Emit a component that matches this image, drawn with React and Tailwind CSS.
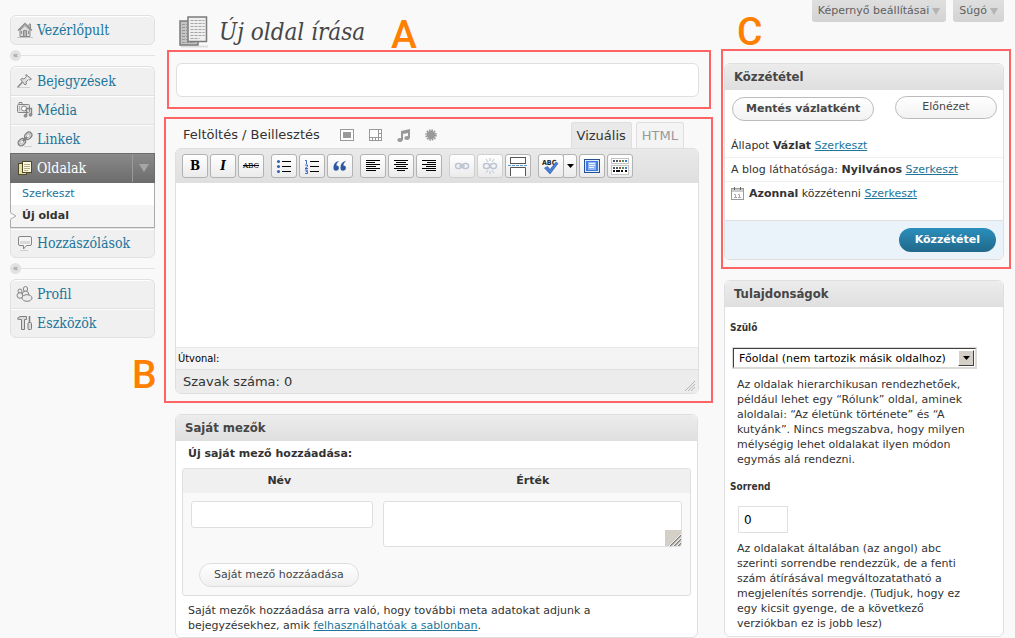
import { useState } from 'react';

const sans = "font-['DejaVu_Sans',Verdana,sans-serif]";
const narrow = "font-['DejaVu_Sans_Condensed','DejaVu_Sans',Tahoma,sans-serif]";
const serif = "font-['DejaVu_Serif_Condensed','DejaVu_Serif',Georgia,serif]";

/* ---------- menu icons ---------- */

function HomeIcon() {
  return (
    <svg width="16" height="16" viewBox="0 0 16 16" fill="none" stroke="#8a8a8a">
      <path d="M1 8.5 8 1.5l7 7" strokeWidth="1.3" />
      <path d="M12 5V2h1.5v4.5" />
      <path d="M3 8v6.5h10V8L8 3.5z" fill="#dedede" />
      <path d="M6.5 14V8.500h3V14M8 8v6M4.500 9v3M11.500 9v3" />
      <path d="M0 15.500h16" stroke="#c6c6c6" />
    </svg>
  );
}

function PinIcon() {
  return (
    <svg width="16" height="16" viewBox="0 0 16 16" fill="none" stroke="#858585">
      <path d="M9 1.500 14.500 6l-1.500 1-1.500-.5-2.500 2.500.5 2-1.500 1L3.500 6.500l1.500-1 2 .5 2.500-2.500L8.500 2z" fill="#dcdcdc" />
      <path d="M5.500 9 .5 14.500" strokeWidth="1.400" />
      <path d="M9.500 4.500l2 2" stroke="#fff" />
      <path d="M2 14.500h11" stroke="#d0d0d0" />
    </svg>
  );
}

function MediaIcon() {
  return (
    <svg width="16" height="16" viewBox="0 0 16 16" fill="none" stroke="#858585">
      <rect x=".5" y="2.500" width="12" height="8" rx="1" fill="#e2e2e2" />
      <path d="M2 2V.5h3V2" />
      <circle cx="7" cy="6.500" r="2.500" fill="#fff" />
      <path d="M2.500 4v5" stroke="#b5b5b5" />
      <path d="M9.500 14V6.500h5V13" strokeWidth="1.400" />
      <circle cx="8.500" cy="13.800" r="1.400" fill="#999" />
      <circle cx="13.500" cy="12.800" r="1.400" fill="#999" />
    </svg>
  );
}

function ChainIcon() {
  return (
    <svg width="16" height="16" viewBox="0 0 16 16" fill="none">
      <g transform="rotate(-45 8 8)">
        <rect x="-.5" y="5" width="8" height="6" rx="3" stroke="#7d7d7d" strokeWidth="1.200" fill="#d5d5d5" />
        <rect x="8.500" y="5" width="8" height="6" rx="3" stroke="#7d7d7d" strokeWidth="1.200" fill="#d5d5d5" />
        <rect x="1.500" y="7" width="4" height="2" rx="1" fill="#fff" stroke="#999" strokeWidth=".6" />
        <rect x="10.500" y="7" width="4" height="2" rx="1" fill="#fff" stroke="#999" strokeWidth=".6" />
        <path d="M5 8h6" stroke="#7d7d7d" strokeWidth="2" />
      </g>
      <path d="M7 15.500h8" stroke="#d0d0d0" />
    </svg>
  );
}

function PagesIcon() {
  return (
    <svg width="16" height="16" viewBox="0 0 16 16" fill="none">
      <rect x="1.500" y="3.500" width="8" height="11" fill="#eadf9c" stroke="#4f4a2c" />
      <rect x="5.500" y="1.500" width="9" height="11" fill="#fdf9df" stroke="#4f4a2c" />
      <path d="M7 4.500h6M7 6.500h6M7 8.500h6M7 10.500h4" stroke="#b9b08a" />
    </svg>
  );
}

function CommentIcon() {
  return (
    <svg width="16" height="16" viewBox="0 0 16 16" fill="none">
      <path d="M3 1.500h10q1.500 0 1.500 1.500v6q0 1.500-1.500 1.500H9.500l-3 3.500v-3.500H3Q1.500 10.500 1.500 9V3q0-1.500 1.500-1.500z" fill="#f4f4f4" stroke="#858585" />
      <path d="M3 6h10v3H3z" fill="#dadada" />
      <path d="M3 15.500h8" stroke="#cfcfcf" />
    </svg>
  );
}

function UsersIcon() {
  return (
    <svg width="17" height="16" viewBox="0 0 17 16" fill="#ececec" stroke="#858585">
      <circle cx="4" cy="5" r="2" />
      <ellipse cx="4" cy="9.500" rx="3" ry="2.800" />
      <ellipse cx="9.500" cy="3" rx="2.200" ry="2.500" />
      <path d="M7 6q3-2 5 0l1 3-3 2-4-2z" />
      <ellipse cx="11" cy="12" rx="5" ry="3.300" />
    </svg>
  );
}

function ToolsIcon() {
  return (
    <svg width="16" height="16" viewBox="0 0 16 16" fill="#dcdcdc" stroke="#7d7d7d">
      <path d="M.5 4Q1 1.500 4 1.500h5.500v3H7.500v10h-3v-10H3z" />
      <path d="M12.500 1v6" strokeWidth="1.500" />
      <rect x="11" y="7.500" width="3.500" height="7" rx="1" />
    </svg>
  );
}

function BigPagesIcon() {
  return (
    <svg width="32" height="32" viewBox="0 0 32 32" fill="none">
      <path d="M2 30.500h27" stroke="#dedede" strokeWidth="2" />
      <rect x="1" y="5" width="18" height="24" fill="#c3c3c3" stroke="#7b7b7b" strokeWidth="1.500" />
      <path d="M3 8.500h5M3 11.500h5M3 14.500h5M3 17.500h5M3 20.500h5M3 23.500h5M3 26.500h13" stroke="#989898" strokeDasharray="3 1" />
      <rect x="9" y="1" width="18.500" height="24.500" fill="#efefef" stroke="#7b7b7b" strokeWidth="1.500" />
      <path d="M11.500 4.500h14M11.500 7.500h14M11.500 10.500h14M11.500 13.500h14M11.500 16.500h14M11.500 19.500h14M11.500 22.500h9" stroke="#a3a3a3" strokeDasharray="3 1" />
    </svg>
  );
}

/* ---------- sidebar ---------- */

function MenuItem({ icon, label, first, last }) {
  return (
    <li
      className={`border-x border-t border-[#e0e0e0] bg-[#f0f0f0] shadow-[inset_0_1px_0_#fff] ${first ? 'rounded-t-md' : ''} ${last ? 'rounded-b-md border-b' : ''}`}
    >
      <a href="#" className={`flex h-7 items-center gap-1 pl-[5px] text-[14px] text-[#21759b] ${serif}`}>
        <span className="flex w-[17px] justify-center">{icon}</span>
        {label}
      </a>
    </li>
  );
}

function MenuSeparator() {
  return (
    <li className="flex h-[21px] items-center">
      <span className="flex size-[11px] items-center justify-center rounded-full bg-[#e2e2e2] text-[9px] leading-none text-[#888]">
        «
      </span>
      <span className="h-px flex-1 bg-[#e3e3e3]" />
    </li>
  );
}

function Sidebar() {
  return (
    <nav className="w-[145px] shrink-0 pt-[15px]">
      <ul>
        <MenuItem icon={<HomeIcon />} label="Vezérlőpult" first last />
        <MenuSeparator />
        <MenuItem icon={<PinIcon />} label="Bejegyzések" first />
        <MenuItem icon={<MediaIcon />} label="Média" />
        <MenuItem icon={<ChainIcon />} label="Linkek" />
        <li>
          <div className="flex h-[30px] border border-[#6d6d6d] bg-linear-to-b from-[#8a8a8a] to-[#6d6d6d]">
            <a href="#" className={`flex flex-1 items-center gap-1 pl-[5px] text-[14px] text-white ${serif}`}>
              <span className="flex w-[17px] justify-center"><PagesIcon /></span>
              Oldalak
            </a>
            <button aria-label="Almenü" className="flex w-[22px] items-center justify-center border-l border-[#9a9a9a]">
              <svg width="10" height="8" viewBox="0 0 10 8"><path d="M0 0h10L5 8z" fill="#a5a5a5" /></svg>
            </button>
          </div>
          <ul className="border-x border-b border-[#aaa] text-[11px]">
            <li className="h-[22px] bg-white pl-[11px] leading-[21px]">
              <a href="#" className="text-[#21759b]">Szerkeszt</a>
            </li>
            <li className="relative h-[22px] bg-[#f4f4f4] pl-[11px] leading-[21px] font-bold text-[#333]">
              <svg className="absolute top-[7px] -left-px" width="7" height="8" viewBox="0 0 7 8">
                <path d="M0 0l6 4-6 4z" fill="#f9f9f9" />
                <path d="M0 .5 6 4 0 7.500" fill="none" stroke="#aaa" />
              </svg>
              <a href="#">Új oldal</a>
            </li>
          </ul>
        </li>
        <MenuItem icon={<CommentIcon />} label="Hozzászólások" last />
        <MenuSeparator />
        <MenuItem icon={<UsersIcon />} label="Profil" first />
        <MenuItem icon={<ToolsIcon />} label="Eszközök" last />
      </ul>
    </nav>
  );
}

/* ---------- header ---------- */

function MetaButton({ children }) {
  return (
    <button className="flex h-[22px] items-center gap-[3px] rounded-b-[3px] bg-linear-to-b from-[#dfdfdf] to-[#d3d3d3] px-[6px] text-[11px] text-[#606060]">
      {children}
      <svg width="8" height="7" viewBox="0 0 8 7"><path d="M0 0h8L4 7z" fill="#b4b4b4" /></svg>
    </button>
  );
}

function Header() {
  return (
    <header className="flex h-[62px] items-start justify-between">
      <div className="relative flex items-center gap-2 pt-4 pl-[3px]">
        <BigPagesIcon />
        <h1 className={`text-[24px] leading-8 text-[#464646] italic ${serif}`}>Új oldal írása</h1>
        <Letter className="top-[15px] left-[215px]">A</Letter>
      </div>
      <div className="flex gap-[7px]">
        <MetaButton>Képernyő beállításai</MetaButton>
        <MetaButton>Súgó</MetaButton>
      </div>
    </header>
  );
}

/* ---------- callouts ---------- */

function Frame({ className }) {
  return <div className={`pointer-events-none absolute border-2 border-[#ff6464] ${className}`} />;
}

function Letter({ className, children }) {
  return (
    <span className={`pointer-events-none absolute font-[Roboto,Arial,sans-serif] text-[39px] leading-10 font-medium text-[#ff8000] ${className}`}>
      {children}
    </span>
  );
}

/* ---------- editor ---------- */

function ToolButton({ label, disabled, children }) {
  return (
    <button
      aria-label={label}
      disabled={disabled}
      className="flex h-6 w-[26px] items-center justify-center rounded-[3px] border border-[#b2b2b2] bg-linear-to-b from-white to-[#ebebeb] disabled:border-[#cfcfcf]"
    >
      {children}
    </button>
  );
}

function Lines({ rows }) {
  return (
    <svg width="16" height="14" viewBox="0 0 16 14" stroke="#000" shapeRendering="crispEdges">
      {rows.map(([x1, x2], i) => (
        <path key={i} d={`M${x1} ${i * 2 + 1.5}H${x2}`} />
      ))}
    </svg>
  );
}

const alignLeft = [[1, 15], [1, 10], [1, 15], [1, 11], [1, 15], [1, 11]];
const alignCenter = [[1, 15], [3, 13], [1, 15], [3, 13], [1, 15], [4, 12]];
const alignRight = [[1, 15], [6, 15], [1, 15], [5, 15], [1, 15], [5, 15]];

function BulletIcon() {
  return (
    <svg width="16" height="14" viewBox="0 0 16 14">
      <path d="M6 2.500h9M6 7.500h9M6 12.500h9" stroke="#000" shapeRendering="crispEdges" />
      <g fill="#2f5fb3">
        <circle cx="2.500" cy="2.500" r="1.500" />
        <circle cx="2.500" cy="7.500" r="1.500" />
        <circle cx="2.500" cy="12.500" r="1.500" />
      </g>
    </svg>
  );
}

function NumberIcon() {
  return (
    <svg width="16" height="15" viewBox="0 0 16 15">
      <path d="M6 2.500h9M6 7.500h9M6 12.500h9" stroke="#000" shapeRendering="crispEdges" />
      <path d="M1 1.500h1.500V5M1 6h2.500v1.500L1 9.500h3M1 11h2.500L2 12.500h1.500V14.500H1" fill="none" stroke="#3a67c4" />
    </svg>
  );
}

function QuoteIcon() {
  return (
    <svg width="14" height="11" viewBox="0 0 14 11" fill="#2d57a0">
      <path d="M5.500 0C2 .8.500 3.500.5 7a2.700 2.700 0 1 0 3-2.600C3.500 3 4 1.500 5.500.8zM12.500 0C9 .8 7.500 3.500 7.500 7a2.700 2.700 0 1 0 3-2.600c0-1.400.5-2.900 2-3.600z" />
    </svg>
  );
}

function LinkIcon({ broken }) {
  return (
    <svg width="16" height="16" viewBox="0 0 16 16" fill="none" stroke="#bcc4d3">
      <rect x="1.500" y="5.500" width="6" height="5" rx="2.500" strokeWidth="1.500" />
      <rect x="8.500" y="5.500" width="6" height="5" rx="2.500" strokeWidth="1.500" />
      {broken ? <path d="M4 1l2 3M8 0v3M12 1l-2 3M4 15l2-3M8 16v-3M12 15l-2-3" /> : <path d="M5 8h6" strokeWidth="1.500" />}
    </svg>
  );
}

function MoreTagIcon() {
  return (
    <svg width="20" height="20" viewBox="0 0 20 20" fill="#fff" stroke="#555">
      <rect x="2.500" y="1.500" width="15" height="6" />
      <path d="M2.500 20v-8.500h15V20" />
      <path d="M0 9.500h20" stroke="#5b9ad0" strokeDasharray="3 1" />
    </svg>
  );
}

function SpellIcon() {
  return (
    <svg width="18" height="17" viewBox="0 0 18 17">
      <text x="0" y="7" fontFamily="DejaVu Sans Condensed" fontSize="7" fontWeight="bold" fill="#222">ABC</text>
      <path d="M2.500 10l3-1.500 2.500 3 6-7.500 2 1.500-8 10.500z" fill="#4a7fd6" stroke="#2c56a4" strokeWidth=".6" />
    </svg>
  );
}

function FullscreenIcon() {
  return (
    <svg width="16" height="14" viewBox="0 0 16 14">
      <rect x=".5" y=".5" width="15" height="13" fill="#dfe9fb" stroke="#2a4f94" />
      <rect x="2" y="2" width="12" height="10" fill="#3f7ae0" />
      <rect x="4" y="3" width="8" height="8" fill="#8fb4f5" />
      <path d="M5 4.500h6M5 6.500h6M5 8.500h5" stroke="#eef4ff" />
    </svg>
  );
}

function KitchenSinkIcon() {
  return (
    <svg width="18" height="17" viewBox="0 0 18 17" shapeRendering="crispEdges">
      <rect x=".5" y=".5" width="17" height="5" fill="#fff" stroke="#c4c4c4" />
      <rect x=".5" y="7.500" width="17" height="9" fill="#fff" stroke="#c4c4c4" />
      <path d="M2 3h2M5 3h2M2 10h2M5 10h2" stroke="#4a5468" strokeWidth="2" />
      <path d="M8 3h2M8 10h2" stroke="#b4552c" strokeWidth="2" />
      <path d="M11 3h2M11 10h2" stroke="#3c9a6a" strokeWidth="2" />
      <path d="M14 3h2M14 10h2" stroke="#2b7fe0" strokeWidth="2" />
      <path d="M2 13h2M5 13h4M10 13h2M14 13h2" stroke="#111" strokeWidth="2" />
    </svg>
  );
}

function MediaButtons() {
  return (
    <div className="flex items-center gap-[15px] pl-5">
      <button aria-label="Kép">
        <svg width="14" height="12" viewBox="0 0 14 12"><rect x=".5" y=".5" width="13" height="11" fill="#fff" stroke="#999" /><rect x="3" y="3" width="8" height="6" fill="#999" /></svg>
      </button>
      <button aria-label="Videó">
        <svg width="13" height="12" viewBox="0 0 13 12"><rect x=".5" y=".5" width="12" height="11" fill="#fff" stroke="#999" /><path d="M9.500 0v8M0 8.500h13M3.500 9v3M6.500 9v3M9.500 9v3M9 4.500h4" stroke="#999" /></svg>
      </button>
      <button aria-label="Hang">
        <svg width="13" height="13" viewBox="0 0 13 13" fill="#999"><path d="M4 2l9-2v9h-2V4L6 5v6H4z" /><ellipse cx="3" cy="11" rx="2.700" ry="1.900" /><ellipse cx="10" cy="9" rx="2.700" ry="1.900" /></svg>
      </button>
      <button aria-label="Egyéb média">
        <svg width="12" height="12" viewBox="0 0 12 12">
          <circle cx="6" cy="6" r="4.200" fill="#999" />
          <circle cx="6" cy="6" r="4.800" fill="none" stroke="#999" strokeWidth="2" strokeDasharray="1.500 1" />
        </svg>
      </button>
    </div>
  );
}

function Editor() {
  return (
    <section className="relative mt-[25px]">
      <Frame className="-top-[5px] -right-[14px] -bottom-[9px] -left-[11px]" />
      <Letter className="top-[233px] -left-[43px]">B</Letter>
      <div className="flex h-[26px] items-stretch justify-between pr-[15px] pl-2">
        <div className="flex items-center">
          <span className="text-[13px] leading-5 text-[#333]">Feltöltés / Beillesztés</span>
          <MediaButtons />
        </div>
        <div className="flex gap-1 text-[13px]">
          <button className="rounded-t-[3px] border border-b-0 border-[#dfdfdf] bg-[#e9e9e9] px-[5px] text-[#333]">Vizuális</button>
          <button className="rounded-t-[3px] border border-b-0 border-[#dfdfdf] bg-[#f4f4f4] px-[5px] text-[#999]">HTML</button>
        </div>
      </div>
      <div className="overflow-hidden rounded-md border border-[#dfdfdf]">
        <div className="flex h-[34px] items-center gap-[2px] bg-linear-to-b from-[#e9e9e9] to-[#dfdfdf] px-[6px]">
          <ToolButton label="Félkövér"><b className="font-['DejaVu_Serif'] text-[12px]">B</b></ToolButton>
          <ToolButton label="Dőlt"><b className="font-['DejaVu_Serif'] text-[12px] italic">I</b></ToolButton>
          <ToolButton label="Áthúzott"><s className="font-['DejaVu_Serif_Condensed'] text-[8px]">ABC</s></ToolButton>
          <span className="w-[3px]" />
          <ToolButton label="Felsorolás"><BulletIcon /></ToolButton>
          <ToolButton label="Számozott lista"><NumberIcon /></ToolButton>
          <ToolButton label="Idézet"><QuoteIcon /></ToolButton>
          <span className="w-[3px]" />
          <ToolButton label="Balra"><Lines rows={alignLeft} /></ToolButton>
          <ToolButton label="Középre"><Lines rows={alignCenter} /></ToolButton>
          <ToolButton label="Jobbra"><Lines rows={alignRight} /></ToolButton>
          <span className="w-[3px]" />
          <ToolButton label="Hivatkozás" disabled><LinkIcon /></ToolButton>
          <ToolButton label="Hivatkozás törlése" disabled><LinkIcon broken /></ToolButton>
          <ToolButton label="Tovább"><MoreTagIcon /></ToolButton>
          <span className="w-[3px]" />
          <div className="flex">
            <ToolButton label="Helyesírás"><SpellIcon /></ToolButton>
            <button aria-label="Nyelvek" className="-ml-px flex w-[14px] items-center justify-center rounded-r-[3px] border border-[#b2b2b2] bg-linear-to-b from-white to-[#ebebeb]">
              <svg width="7" height="4" viewBox="0 0 7 4"><path d="M0 0h7L3.500 4z" /></svg>
            </button>
          </div>
          <ToolButton label="Teljes képernyő"><FullscreenIcon /></ToolButton>
          <ToolButton label="Eszköztár"><KitchenSinkIcon /></ToolButton>
        </div>
        <textarea aria-label="Tartalom" className="block h-[164px] w-full resize-none bg-white p-2 text-[13px] outline-none" />
        <div className={`h-[22px] border-t border-[#e9e9e9] bg-[#f4f4f4] pl-[2px] text-[11px] leading-[21px] text-black ${narrow}`}>
          Útvonal:
        </div>
        <div className="flex h-6 items-center justify-between border-t border-[#dfdfdf] bg-[#ececec] pr-[2px] pl-[7px] text-[13px] text-[#333]">
          <span>Szavak száma: 0</span>
          <svg className="self-end" width="12" height="14" viewBox="0 0 12 14" stroke="#b5b5b5"><path d="M1 12 11 2M4 12l7-7M7 12l4-4" /></svg>
        </div>
      </div>
    </section>
  );
}

/* ---------- boxes ---------- */

function PostBox({ title, className = '', children }) {
  return (
    <section className={`rounded-md border border-[#dfdfdf] bg-white ${className}`}>
      <h3 className={`h-[26px] rounded-t-md bg-linear-to-b from-[#ececec] to-[#dfdfdf] pl-[9px] text-[13px] leading-[26px] font-bold text-[#464646] ${narrow}`}>
        {title}
      </h3>
      {children}
    </section>
  );
}

function CustomFields() {
  return (
    <PostBox title="Saját mezők" className="mt-5 mr-px">
      <div className="px-[6px] pb-1">
        <p className="pt-[5px] pl-[6px] text-[11px] leading-4 font-bold text-[#333]">Új saját mező hozzáadása:</p>
        <div className="mt-[6px] overflow-hidden rounded-[3px] border border-[#dfdfdf] bg-[#f9f9f9] pb-2">
          <table className="w-full table-fixed text-[11px] text-[#333]">
            <thead>
              <tr className="h-6 bg-[#f0f0f0]">
                <th className="w-[38%] pb-px leading-4">Név</th>
                <th className="pb-px leading-4">Érték</th>
              </tr>
            </thead>
            <tbody>
              <tr className="align-top">
                <td className="py-2 pr-[3px] pl-2">
                  <input aria-label="Név" type="text" className="block h-[27px] w-full rounded-[3px] border border-[#dfdfdf] bg-white px-1 outline-none" />
                </td>
                <td className="py-2 pr-2 pl-[7px]">
                  <div className="relative">
                    <textarea aria-label="Érték" className="block h-[46px] w-full resize-none rounded-[3px] border border-[#dfdfdf] bg-white px-1 outline-none" />
                    <svg className="absolute right-px bottom-px" width="16" height="16" viewBox="0 0 16 16">
                      <path d="M0 0h16v16H0z" fill="#d4d0c8" />
                      <path d="M5 16 16 5M9 16l7-7M13 16l3-3" stroke="#808080" strokeWidth="1.500" />
                      <path d="M4 16 16 4M8 16l8-8M12 16l4-4" stroke="#fff" strokeWidth=".8" />
                    </svg>
                  </div>
                </td>
              </tr>
            </tbody>
          </table>
          <button className="mt-2 ml-4 h-6 rounded-full border border-[#ddd] bg-linear-to-b from-white to-[#f0f0f0] px-[14px] text-[11px] text-[#464646]">
            Saját mező hozzáadása
          </button>
        </div>
        <p className="mt-[7px] mr-[60px] pl-[6px] text-[11px] leading-[15px] text-[#333]">
          Saját mezők hozzáadása arra való, hogy további meta adatokat adjunk a bejegyzésekhez, amik{' '}
          <a href="#" className="text-[#21759b] underline">felhasználhatóak a sablonban</a>.
        </p>
      </div>
    </PostBox>
  );
}

function EditLink() {
  return <a href="#" className="text-[#21759b] underline">Szerkeszt</a>;
}

function PublishBox() {
  return (
    <div className="relative">
      <Frame className="-top-[14px] -right-[7px] -bottom-[9px] -left-[3px]" />
      <Letter className="-top-[51px] left-[13px]">C</Letter>
      <PostBox title="Közzététel">
        <div className="flex items-start justify-between pr-[6px] pl-[7px]">
          <button className="mt-[7px] h-6 rounded-full border border-[#bbb] bg-linear-to-b from-white to-[#f2f2f2] px-[13px] text-[11px] font-bold text-[#464646]">
            Mentés vázlatként
          </button>
          <button className="mt-[6px] h-[23px] w-[102px] rounded-full border border-[#bbb] bg-linear-to-b from-white to-[#f2f2f2] text-[11px] text-[#464646]">
            Előnézet
          </button>
        </div>
        <div className="pt-[13px] text-[11px] leading-[23px] text-[#333]">
          <p className="border-b border-[#eee] pl-[6px]">Állapot <b>Vázlat</b> <EditLink /></p>
          <p className="border-b border-[#eee] pl-[6px]">A blog láthatósága: <b>Nyilvános</b> <EditLink /></p>
          <p className="flex items-center gap-[5px] pb-[15px] pl-[6px]">
            <svg width="13" height="13" viewBox="0 0 13 13">
              <rect x=".5" y="1.500" width="12" height="11" fill="#fff" stroke="#999" />
              <path d="M1 2h11v3H1z" fill="#ccc" />
              <path d="M3.500 0v3M9.500 0v3" stroke="#666" />
              <path d="M3 7.500h1.500V11M3 10.500h3M7 7.500h1.500V11M7 10.500h3" fill="none" stroke="#aaa" />
            </svg>
            <span><b>Azonnal</b> közzétenni <EditLink /></span>
          </p>
        </div>
        <div className="flex h-[39px] items-center justify-end rounded-b-md border-t border-[#dfdfdf] bg-[#eaf2fa] pr-[7px]">
          <button className="h-6 rounded-full bg-linear-to-b from-[#2a8fbd] to-[#21688a] px-4 text-[11px] font-bold text-white">
            Közzététel
          </button>
        </div>
      </PostBox>
    </div>
  );
}

function AttributesBox() {
  const [order, setOrder] = useState('0');

  return (
    <PostBox title="Tulajdonságok" className="mt-5">
      <div className="pb-[5px] text-[11px] leading-[15px] text-[#333]">
        <label htmlFor="parent" className={`block pt-[13px] pl-[5px] text-[10px] font-bold ${narrow}`}>Szülő</label>
        <div className="relative mt-3 ml-[7px] w-[245px] border border-[#dcdad5]">
          <select id="parent" className="block h-5 w-full appearance-none border border-t-[#404040] border-r-[#dcdad5] border-b-[#dcdad5] border-l-[#404040] bg-white pl-[5px] text-[11px] text-black outline-none">
            <option>Főoldal (nem tartozik másik oldalhoz)</option>
          </select>
          <span className="pointer-events-none absolute top-[2px] right-[2px] flex h-4 w-4 items-center justify-center border border-t-white border-r-[#404040] border-b-[#404040] border-l-white bg-[#d4d0c8]">
            <svg width="7" height="4" viewBox="0 0 7 4"><path d="M0 0h7L3.500 4z" /></svg>
          </span>
        </div>
        <p className="mt-2 mr-[22px] ml-3">
          Az oldalak hierarchikusan rendezhetőek, például lehet egy “Rólunk” oldal, aminek aloldalai: “Az életünk
          története” és “A kutyánk”. Nincs megszabva, hogy milyen mélységig lehet oldalakat ilyen módon egymás alá
          rendezni.
        </p>
        <label htmlFor="order" className={`block pt-3 pl-[5px] text-[10px] font-bold ${narrow}`}>Sorrend</label>
        <input
          id="order"
          type="text"
          value={order}
          onChange={(e) => setOrder(e.target.value)}
          className="mt-3 ml-[13px] block h-[27px] w-[50px] border border-[#dfdfdf] bg-white px-[5px] text-[12px] text-black outline-none"
        />
        <p className="mt-2 mr-[22px] ml-3">
          Az oldalakat általában (az angol) abc szerinti sorrendbe rendezzük, de a fenti szám átírásával
          megváltozatatható a megjelenítés sorrendje. (Tudjuk, hogy ez egy kicsit gyenge, de a következő verziókban
          ez is jobb lesz)
        </p>
      </div>
    </PostBox>
  );
}

export default function App() {
  const [title, setTitle] = useState('');

  return (
    <div className={`flex min-h-screen gap-[21px] bg-[#f9f9f9] pr-[11px] pl-[10px] ${sans}`}>
      <Sidebar />
      <div className="min-w-0 flex-1">
        <Header />
        <div className="flex gap-[25px]">
          <main className="-ml-px min-w-0 flex-1">
            <div className="relative mt-px ml-px">
              <Frame className="-top-[13px] -right-3 -bottom-3 -left-[9px]" />
              <input
                aria-label="Cím"
                type="text"
                value={title}
                onChange={(e) => setTitle(e.target.value)}
                className="block h-[34px] w-full rounded-md border border-[#dfdfdf] bg-white px-2 text-[20px] outline-none"
              />
            </div>
            <Editor />
            <CustomFields />
          </main>
          <aside className="w-[280px] shrink-0 pt-px">
            <PublishBox />
            <AttributesBox />
          </aside>
        </div>
      </div>
    </div>
  );
}
